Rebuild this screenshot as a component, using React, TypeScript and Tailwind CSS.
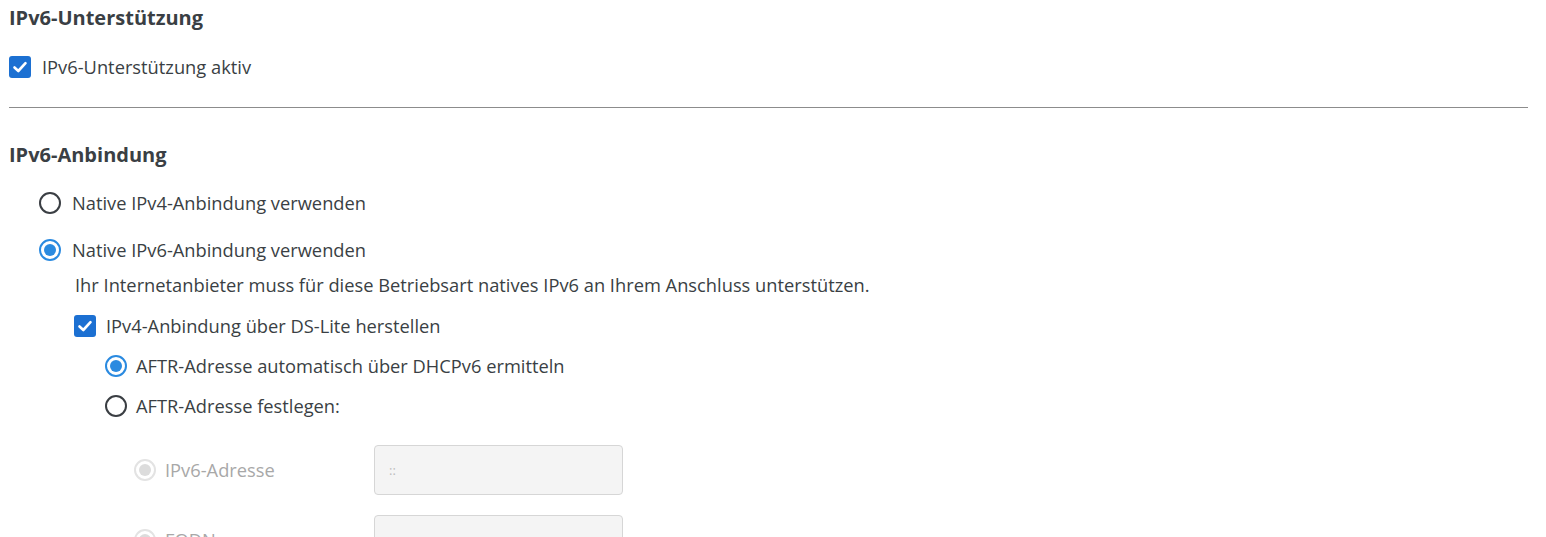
import React from 'react';

const ink = 'text-[#3a3f44]';

const Checkbox: React.FC = () => (
  <span className="w-[22px] h-[22px] shrink-0 rounded-[3px] bg-[#1c70d2] flex items-center justify-center">
    <svg width="16" height="16" viewBox="0 0 16 16" fill="none">
      <path d="M2.5 8.5 L6.3 12 L13.5 4.2" stroke="white" strokeWidth="2.6" strokeLinecap="round" strokeLinejoin="round" />
    </svg>
  </span>
);

const Radio: React.FC<{ checked?: boolean; disabled?: boolean }> = ({ checked, disabled }) => {
  if (disabled) {
    return (
      <span className="w-[22px] h-[22px] shrink-0 rounded-full border-2 border-[#e3e3e3] flex items-center justify-center">
        <span className="w-[12px] h-[12px] rounded-full bg-[#dcdcdc]" />
      </span>
    );
  }
  return checked ? (
    <span className="w-[22px] h-[22px] shrink-0 rounded-full border-2 border-[#2a8ae0] flex items-center justify-center">
      <span className="w-[12px] h-[12px] rounded-full bg-[#2a8ae0]" />
    </span>
  ) : (
    <span className="w-[22px] h-[22px] shrink-0 rounded-full border-2 border-[#3a3e43]" />
  );
};

export default function App() {
  return (
    <div
      className={`w-[1546px] h-[537px] overflow-hidden bg-white pl-[9px] pr-[18px] ${ink} text-[18.3px] leading-[28px]`}
      style={{ fontFamily: '"Open Sans", "Noto Sans", sans-serif' }}
    >
      <h2 className="mt-[4px] text-[20px] font-bold leading-[28px]">IPv6-Unterstützung</h2>

      <label className="mt-[21px] flex items-center gap-[11px]">
        <Checkbox />
        <span>IPv6-Unterstützung aktiv</span>
      </label>

      <hr className="mt-[26px] border-0 border-t border-[#8c8c8c]" />

      <h2 className="mt-[33px] text-[20px] font-bold leading-[28px]">IPv6-Anbindung</h2>

      {/* Anbindung options */}
      <div className="ml-[30px]">
        <label className="mt-[20px] flex items-center gap-[11px]">
          <Radio />
          <span>Native IPv4-Anbindung verwenden</span>
        </label>
        <label className="mt-[19px] flex items-center gap-[11px]">
          <Radio checked />
          <span>Native IPv6-Anbindung verwenden</span>
        </label>

        <div className="ml-[36px]">
          <p className="mt-[7px]">
            Ihr Internetanbieter muss für diese Betriebsart natives IPv6 an Ihrem Anschluss unterstützen.
          </p>
          <label className="mt-[13px] -ml-[1px] flex items-center gap-[10px]">
            <Checkbox />
            <span>IPv4-Anbindung über DS-Lite herstellen</span>
          </label>

          <div className="ml-[30px]">
            <label className="mt-[12px] flex items-center gap-[9px]">
              <Radio checked />
              <span>AFTR-Adresse automatisch über DHCPv6 ermitteln</span>
            </label>
            <label className="mt-[12px] flex items-center gap-[9px]">
              <Radio />
              <span>AFTR-Adresse festlegen:</span>
            </label>

            {/* Manual AFTR fields (disabled) */}
            <div className="ml-[29px] text-[#a8a8a8]">
              <div className="mt-[25px] flex items-center">
                <label className="w-[240px] flex items-center gap-[9px]">
                  <Radio disabled />
                  <span>IPv6-Adresse</span>
                </label>
                <div className="w-[249px] h-[50px] rounded-[4px] border border-[#d6d6d6] bg-[#f4f4f4] flex items-center px-[14px] text-[13px] text-[#bdbdbd]">
                  ::
                </div>
              </div>
              <div className="mt-[20px] flex items-center">
                <label className="w-[240px] flex items-center gap-[9px]">
                  <Radio disabled />
                  <span>FQDN</span>
                </label>
                <div className="w-[249px] h-[50px] rounded-[4px] border border-[#d6d6d6] bg-[#f4f4f4]" />
              </div>
            </div>
          </div>
        </div>
      </div>
    </div>
  );
}
